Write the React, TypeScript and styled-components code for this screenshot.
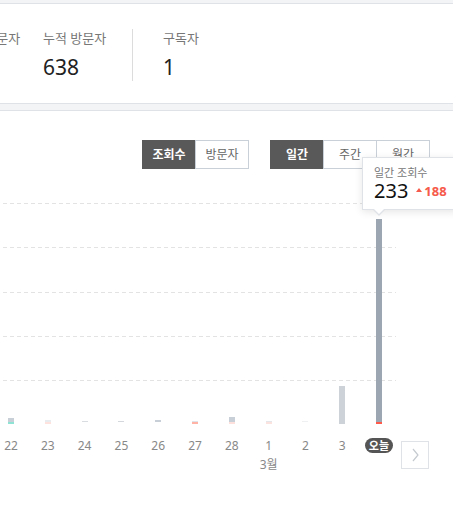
import React from 'react';
import styled, { createGlobalStyle } from 'styled-components';

const GlobalStyle = createGlobalStyle`
  html, body { margin: 0; padding: 0; background: #fff; }
  body { font-family: "Noto Sans", "Noto Sans CJK KR", sans-serif; }
  * { box-sizing: border-box; }
`;

const Page = styled.div`
  width: 453px;
  height: 509px;
  overflow: hidden;
  background: #f3f4f6;
  padding-top: 3px;
`;

const Card = styled.section`
  background: #fff;
  border-top: 1px solid #dfe2e7;
  border-bottom: 1px solid #dfe2e7;
`;

const StatsCard = styled(Card)`
  height: 101px;
  padding-top: 25px;
  margin-bottom: 6px;
`;

const StatsRow = styled.div`
  display: flex;
  align-items: stretch;
  margin-left: -43px;
`;

const Stat = styled.div`
  display: flex;
  flex-direction: column;
  width: 86px;
`;

const LastStat = styled(Stat)`
  width: auto;
`;

const StatLabel = styled.div`
  font-size: 13px;
  line-height: 19px;
  color: #777;
  white-space: nowrap;
`;

const StatValue = styled.div`
  font-size: 21px;
  line-height: 28px;
  color: #222;
  margin-top: 5px;
`;

const StatDivider = styled.div`
  width: 1px;
  background: #dcdcdc;
  margin: 0 30px 0 3px;
`;

const ChartCard = styled(Card)`
  padding-top: 29px;
  height: 420px;
`;

const Toolbar = styled.div`
  display: flex;
  justify-content: flex-end;
  gap: 21px;
  padding-right: 23px;
`;

const ToggleGroup = styled.div`
  display: flex;
`;

const ToggleButton = styled.button<{ $active?: boolean }>`
  width: 54px;
  height: 29px;
  margin: 0 0 0 -1px;
  padding: 0;
  font-family: inherit;
  font-size: 12px;
  line-height: 27px;
  border: 1px solid ${(p) => (p.$active ? '#595959' : '#c9d0d8')};
  background: ${(p) => (p.$active ? '#595959' : '#fff')};
  color: ${(p) => (p.$active ? '#fff' : '#666')};
  font-weight: ${(p) => (p.$active ? 700 : 400)};
  &:first-child { margin-left: 0; }
`;

const ChartBody = styled.div`
  position: relative;
  display: flex;
  margin-top: 34px;
  margin-left: -7.4px;
`;

const PlotColumn = styled.div`
  width: 404.8px;
  display: flex;
  flex-direction: column;
`;

const Plot = styled.div`
  display: grid;
  height: 221px;
  & > * { grid-area: 1 / 1; }
`;

const GridLines = styled.div`
  display: flex;
  flex-direction: column;
  margin: 0 1px 0 10px;
`;

const GridLine = styled.div`
  height: 44.25px;
  background: repeating-linear-gradient(to right, #e3e3e3 0 4px, transparent 4px 7px) top / 100% 1px no-repeat;
`;

const Bars = styled.div`
  display: flex;
  align-items: stretch;
`;

const BarCol = styled.div`
  width: 36.8px;
  display: flex;
  flex-direction: column;
  align-items: center;
  justify-content: flex-end;
`;

const Bar = styled.div<{ $color: string }>`
  width: 6px;
  background: ${(p) => p.$color};
`;

const Marker = styled.div<{ $color: string }>`
  width: 6px;
  height: 2px;
  background: ${(p) => p.$color};
`;

const AxisRow = styled.div<{ $gap: number }>`
  display: flex;
  margin-top: ${(p) => p.$gap}px;
`;

const AxisCell = styled.div`
  width: 36.8px;
  text-align: center;
  font-size: 12px;
  line-height: 16px;
  color: #888;
  white-space: nowrap;
`;

const TodayPill = styled.span`
  display: inline-block;
  background: #555;
  color: #fff;
  font-size: 11px;
  font-weight: 700;
  line-height: 15px;
  padding: 0 4px;
  border-radius: 8px;
`;

const NextButton = styled.button`
  width: 28px;
  height: 28px;
  margin: 238px 0 0 3.6px;
  padding: 0;
  border: 1px solid #dfe3e8;
  background: #fff;
  display: flex;
  align-items: center;
  justify-content: center;
`;

const Tooltip = styled.div`
  position: absolute;
  left: 369.4px;
  top: -46px;
  width: 100px;
  height: 53px;
  background: #fff;
  border: 1px solid #dfe3e8;
  box-shadow: 0 2px 8px rgba(0, 0, 0, 0.1);
  padding: 7px 0 0 11px;
  &::before,
  &::after {
    content: '';
    position: absolute;
    left: 10px;
    border-left: 6px solid transparent;
    border-right: 6px solid transparent;
  }
  &::before {
    bottom: -7px;
    border-top: 6px solid #dfe3e8;
  }
  &::after {
    bottom: -5px;
    border-top: 6px solid #fff;
  }
`;

const TipLabel = styled.div`
  font-size: 11px;
  line-height: 15px;
  color: #777;
`;

const TipRow = styled.div`
  display: flex;
  align-items: center;
  height: 22px;
`;

const TipValue = styled.span`
  font-size: 20px;
  line-height: 22px;
  color: #111;
`;

const Delta = styled.span`
  display: flex;
  align-items: center;
  margin-left: 8px;
  font-size: 13px;
  font-weight: 700;
  color: #f65a4b;
`;

const UpTriangle = styled.span`
  display: inline-block;
  width: 0;
  height: 0;
  border-left: 3px solid transparent;
  border-right: 3px solid transparent;
  border-bottom: 4px solid #f65a4b;
  margin: 0 2px 2px 0;
`;

type Day = { label: string; h: number; c: string; m: string };

const days: Day[] = [
  { label: '22', h: 4, c: '#c9cfd6', m: '#8fe3d5' },
  { label: '23', h: 2, c: '#e9ecef', m: '#fde2de' },
  { label: '24', h: 1, c: '#d9dde1', m: 'transparent' },
  { label: '25', h: 1, c: '#d4d8dc', m: 'transparent' },
  { label: '26', h: 2, c: '#c9cfd6', m: 'transparent' },
  { label: '27', h: 1, c: '#dfe4ea', m: '#ffb2a6' },
  { label: '28', h: 5, c: '#c9cfd6', m: '#fde0dc' },
  { label: '1', h: 1, c: '#e4e6ea', m: '#fbe3e0' },
  { label: '2', h: 1, c: '#eef0f2', m: 'transparent' },
  { label: '3', h: 36, c: '#ccd2d8', m: '#ccd2d8' },
  { label: '오늘', h: 203, c: '#9ba6b2', m: '#ff5a4a' },
];

export default function App() {
  return (
    <>
      <GlobalStyle />
      <Page>
        <StatsCard>
          <StatsRow>
            <Stat>
              <StatLabel>오늘 방문자</StatLabel>
              <StatValue>47</StatValue>
            </Stat>
            <Stat>
              <StatLabel>누적 방문자</StatLabel>
              <StatValue>638</StatValue>
            </Stat>
            <StatDivider />
            <LastStat>
              <StatLabel>구독자</StatLabel>
              <StatValue>1</StatValue>
            </LastStat>
          </StatsRow>
        </StatsCard>
        <ChartCard>
          <Toolbar>
            <ToggleGroup>
              <ToggleButton $active>조회수</ToggleButton>
              <ToggleButton>방문자</ToggleButton>
            </ToggleGroup>
            <ToggleGroup>
              <ToggleButton $active>일간</ToggleButton>
              <ToggleButton>주간</ToggleButton>
              <ToggleButton>월간</ToggleButton>
            </ToggleGroup>
          </Toolbar>
          <ChartBody>
            <PlotColumn>
              <Plot>
                <GridLines>
                  {[0, 1, 2, 3, 4].map((i) => (
                    <GridLine key={i} />
                  ))}
                </GridLines>
                <Bars>
                  {days.map((d) => (
                    <BarCol key={d.label}>
                      <Bar $color={d.c} style={{ height: d.h }} />
                      <Marker $color={d.m} />
                    </BarCol>
                  ))}
                </Bars>
              </Plot>
              <AxisRow $gap={14}>
                {days.map((d) => (
                  <AxisCell key={d.label}>
                    {d.label === '오늘' ? <TodayPill>오늘</TodayPill> : d.label}
                  </AxisCell>
                ))}
              </AxisRow>
              <AxisRow $gap={3}>
                {days.map((d) => (
                  <AxisCell key={d.label}>{d.label === '1' ? '3월' : ''}</AxisCell>
                ))}
              </AxisRow>
            </PlotColumn>
            <NextButton aria-label="다음">
              <svg width="7" height="14" viewBox="0 0 7 14">
                <polyline points="1,1 6,7 1,13" fill="none" stroke="#c5cad0" strokeWidth="1.2" />
              </svg>
            </NextButton>
            <Tooltip>
              <TipLabel>일간 조회수</TipLabel>
              <TipRow>
                <TipValue>233</TipValue>
                <Delta>
                  <UpTriangle />
                  188
                </Delta>
              </TipRow>
            </Tooltip>
          </ChartBody>
        </ChartCard>
      </Page>
    </>
  );
}
